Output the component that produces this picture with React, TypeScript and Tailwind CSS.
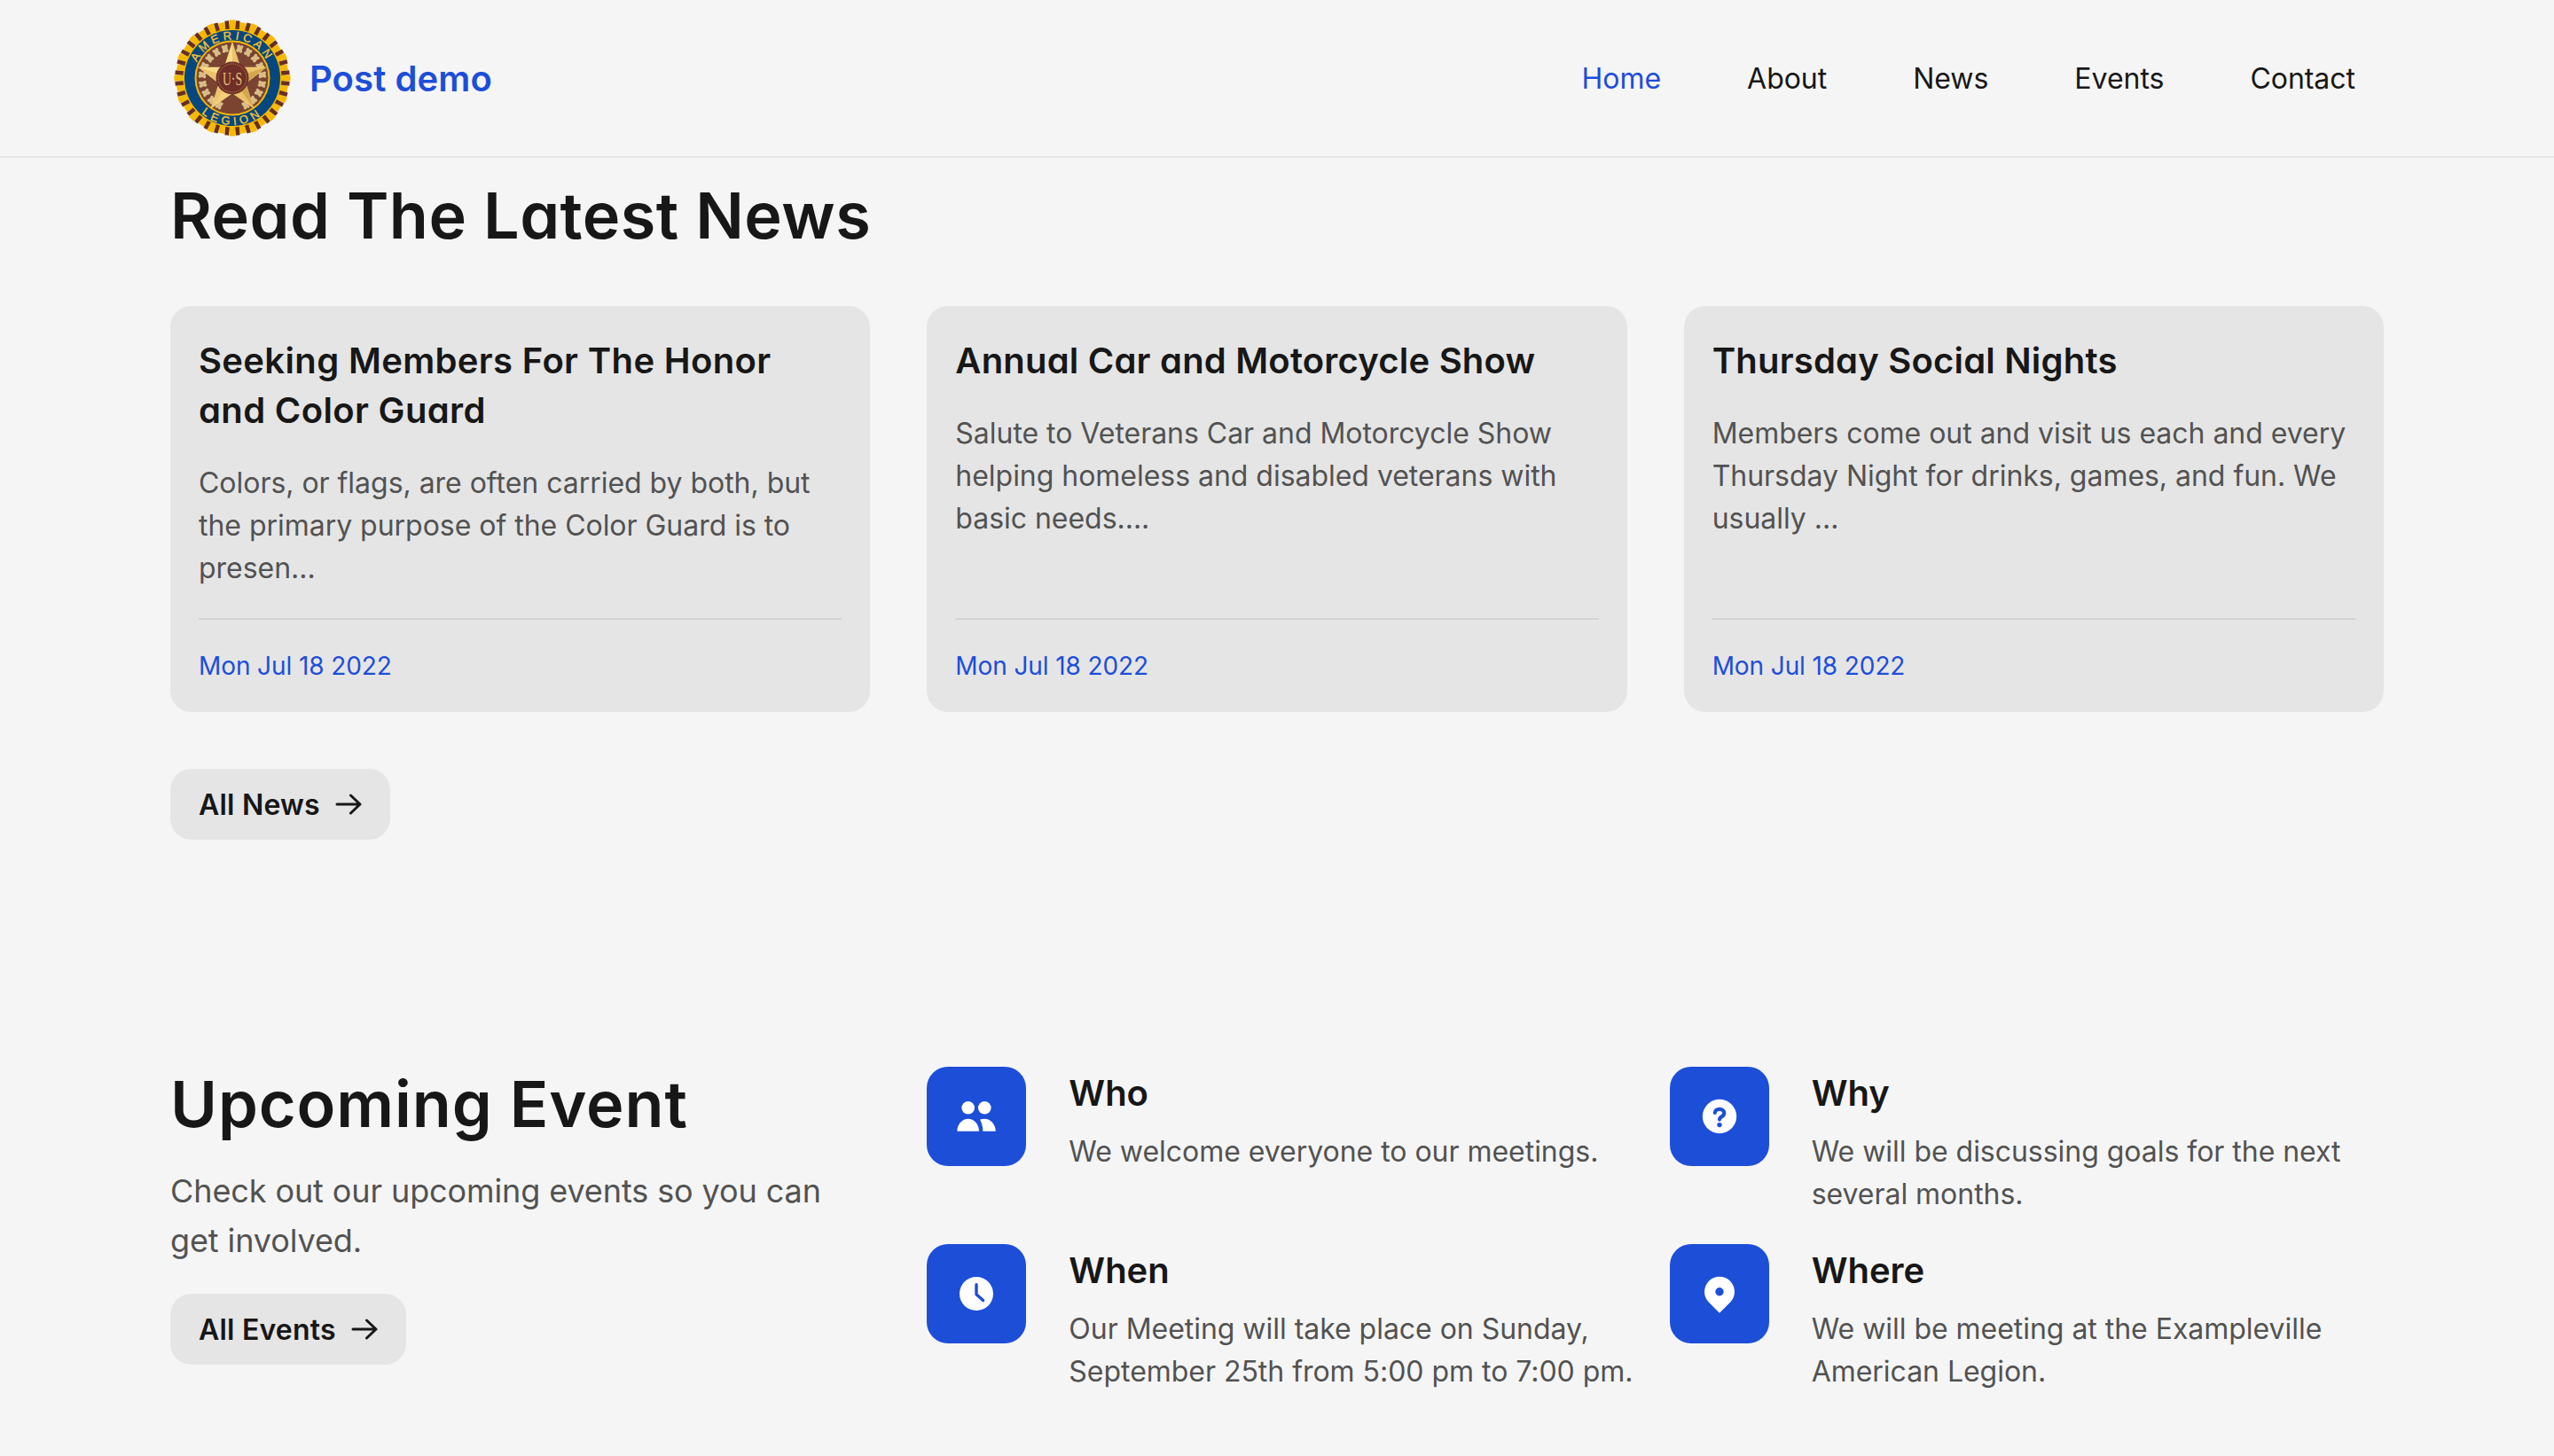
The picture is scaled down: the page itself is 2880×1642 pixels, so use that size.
import React from "react";

const heading = "font-['Inter','Liberation_Sans',sans-serif] [font-feature-settings:'cv11']";

function Logo() {
  const rays = Array.from({ length: 64 }, (_, i) => i);
  const stars = "70,30 79,58 108,58 85,76 94,104 70,87 46,104 55,76 32,58 61,58";
  const leaves = Array.from({ length: 9 }, (_, i) => i);
  const legend = "'Liberation Sans',sans-serif";
  return (
    <svg viewBox="0 0 140 140" className="w-[140px] h-[140px] shrink-0">
      {rays.filter((i) => i % 2 === 0).map((i) => {
        const a = i * 5.625;
        const top = 4.5 + 2 * Math.abs(Math.sin((a * 8 * Math.PI) / 180));
        return <rect key={i} x={66.5} y={top} width={7} height={16} fill="#f6b900" transform={`rotate(${a} 70 70)`} />;
      })}
      {rays.filter((i) => i % 2 === 1).map((i) => {
        const a = i * 5.625;
        const top = 3.5 + 2.5 * Math.abs(Math.sin((a * 8 * Math.PI) / 180));
        return <rect key={i} x={67.7} y={top} width={4.6} height={14} fill="#6a2f1c" transform={`rotate(${a} 70 70)`} />;
      })}
      <circle cx="70" cy="70" r="55.5" fill="#f6b900" />
      <circle cx="70" cy="70" r="54" fill="#07477f" />
      <path id="lg-top" d="M26.5 70 A43.5 43.5 0 0 1 113.5 70" fill="none" />
      <path id="lg-bot" d="M17 70 A53 53 0 0 0 123 70" fill="none" />
      <text fill="#f7c531" stroke="#f7c531" strokeWidth="0.3" fontSize="13" fontFamily={legend} letterSpacing="4" textAnchor="middle">
        <textPath href="#lg-top" startOffset="50%">AMERICAN</textPath>
      </text>
      <text fill="#f7c531" stroke="#f7c531" strokeWidth="0.3" fontSize="13" fontFamily={legend} letterSpacing="4.5" textAnchor="middle">
        <textPath href="#lg-bot" startOffset="50%">LEGION</textPath>
      </text>
      <circle cx="70" cy="70" r="42.5" fill="#f6b900" />
      <circle cx="70" cy="70" r="40.5" fill="#7b4431" />
      {leaves.map((i) => {
        const a = 14 + i * 17.5;
        return (
          <g key={i} fill="#d9bd86">
            <ellipse cx="70" cy="36" rx="2.2" ry="5" transform={`rotate(${a} 70 70) rotate(35 70 36)`} />
            <ellipse cx="70" cy="36" rx="2.2" ry="5" transform={`rotate(${a} 70 70) rotate(-35 70 36)`} />
            <ellipse cx="70" cy="36" rx="2.2" ry="5" transform={`rotate(${-a} 70 70) rotate(35 70 36)`} />
            <ellipse cx="70" cy="36" rx="2.2" ry="5" transform={`rotate(${-a} 70 70) rotate(-35 70 36)`} />
          </g>
        );
      })}
      <polygon points={stars} fill="#ecc36a" stroke="#fbe08f" strokeWidth="0.6" />
      <polygon points="70,30 70,70 61,58" fill="#f9dc8a" />
      <polygon points="32,58 70,70 61,58" fill="#f9dc8a" />
      <polygon points="108,58 70,70 85,76" fill="#d4a650" />
      <polygon points="46,104 70,70 70,87" fill="#f3cf7a" />
      <polygon points="94,104 70,70 85,76" fill="#d4a650" />
      <circle cx="70" cy="70" r="18.5" fill="#6f2f28" />
      <circle cx="70" cy="70" r="16" fill="none" stroke="#d7a95c" strokeWidth="0.8" strokeDasharray="1 1" />
      <text x="70" y="77.5" textAnchor="middle" fill="#e6bf74" fontSize="22" textLength="22" lengthAdjust="spacingAndGlyphs" fontFamily="'Liberation Serif',serif">U·S</text>
    </svg>
  );
}

const Arrow = () => (
  <svg viewBox="0 0 33 36" fill="none" stroke="currentColor" strokeWidth="3" strokeLinecap="round" strokeLinejoin="round" className="w-[33px] h-9 shrink-0">
    <path d="M5 18 H31 M20.5 8 L31 18 L20.5 28" />
  </svg>
);

const Who = () => (
  <svg viewBox="0 0 24 24" fill="white" className="w-12 h-12">
    <circle cx="7.35" cy="7.15" r="3.65" />
    <circle cx="16.65" cy="7.15" r="3.65" />
    <path d="M1.15 20.35 C1.15 16.5 3.9 13.35 7.35 13.35 C10.8 13.35 13.5 16.5 13.5 20.35 Z" />
    <path d="M14 13.8 C15 13.5 15.8 13.35 16.65 13.35 C20.1 13.35 22.85 16.5 22.85 20.35 H15.65 C15.65 17.8 15 15.6 14 13.8 Z" />
  </svg>
);
const Why = () => (
  <svg viewBox="0 0 24 24" className="w-12 h-12">
    <circle cx="12" cy="12" r="9.6" fill="white" />
    <path d="M9.4 10 C9.4 8.7 10.5 7.9 12 7.9 C13.5 7.9 14.6 8.8 14.6 10.1 C14.6 11.2 13.9 11.8 13 12.3 C12.3 12.7 12 13 12 13.8" fill="none" stroke="#1d4ed8" strokeWidth="2.1" strokeLinecap="round" />
    <circle cx="12" cy="16.8" r="1.35" fill="#1d4ed8" />
  </svg>
);
const When = () => (
  <svg viewBox="0 0 24 24" className="w-12 h-12">
    <circle cx="12" cy="12" r="9.5" fill="white" />
    <path d="M12 6.8 V12.4 L15.8 15.8" fill="none" stroke="#1d4ed8" strokeWidth="1.7" strokeLinecap="round" strokeLinejoin="round" />
  </svg>
);
const Where = () => (
  <svg viewBox="0 0 24 24" className="w-12 h-12">
    <path
      fillRule="evenodd"
      fill="white"
      d="M5.99 16.86 A8.5 8.5 0 1 1 18.01 16.86 L12 22.87 Z M12 8.5 A2.35 2.35 0 1 0 12 13.2 A2.35 2.35 0 1 0 12 8.5 Z"
    />
  </svg>
);

const cards = [
  {
    title: ["Seeking Members For The Honor", "and Color Guard"],
    track: "tracking-[0.35px]",
    body: "Colors, or flags, are often carried by both, but the primary purpose of the Color Guard is to presen...",
  },
  {
    title: ["Annual Car and Motorcycle Show"],
    track: "tracking-[0.2px]",
    body: "Salute to Veterans Car and Motorcycle Show helping homeless and disabled veterans with basic needs....",
  },
  {
    title: ["Thursday Social Nights"],
    track: "tracking-[0.2px]",
    body: "Members come out and visit us each and every Thursday Night for drinks, games, and fun. We usually ...",
  },
];

const features = [
  { title: "Who", body: "We welcome everyone to our meetings.", icon: <Who /> },
  { title: "Why", body: "We will be discussing goals for the next several months.", icon: <Why /> },
  { title: "When", body: "Our Meeting will take place on Sunday, September 25th from 5:00 pm to 7:00 pm.", icon: <When /> },
  { title: "Where", body: "We will be meeting at the Exampleville American Legion.", icon: <Where /> },
];

function Button({ label }: { label: string }) {
  return (
    <a className={`inline-flex items-center gap-[14px] h-20 px-8 rounded-3xl bg-[#e5e5e5] text-[#171717] text-[32px] font-semibold tracking-[0.2px] ${heading}`}>
      <span className="pt-0.5">{label}</span>
      <Arrow />
    </a>
  );
}

export default function App() {
  return (
    <div className="h-[1642px] overflow-hidden bg-[#f5f5f5] text-[#171717] font-['Inter','Liberation_Sans',sans-serif]">
      <header className="h-[178px] border-b-2 border-[#e5e5e5]">
        <div className="mx-[192px] h-full flex items-center justify-between pr-8">
          <a className="flex items-center gap-[17px]">
            <Logo />
            <span className={`pt-0.5 text-[40px] font-semibold tracking-[0.1px] text-[#1d4ed8] ${heading}`}>Post demo</span>
          </a>
          <nav className="flex items-center gap-[97px] pt-0.5 text-[32px] leading-[48px] tracking-[-0.03px]">
            <a className="text-[#1d4ed8]">Home</a>
            <a>About</a>
            <a>News</a>
            <a>Events</a>
            <a>Contact</a>
          </nav>
        </div>
      </header>
      <main className="mx-[192px] pt-[23px]">
        <section>
          <h2 className={`text-[72px] leading-[80px] font-semibold pt-0.5 mb-[62px] tracking-[0.45px] ${heading}`}>Read The Latest News</h2>
          <div className="grid grid-cols-3 gap-16">
            {cards.map((c) => (
              <article key={c.title[0]} className="flex flex-col h-[458px] p-8 rounded-3xl bg-[#e5e5e5]">
                <h3 className={`text-[40px] leading-[56px] font-semibold pt-0.5 mb-[30px] ${c.track} ${heading}`}>
                  {c.title.map((line) => (
                    <span key={line} className="block whitespace-nowrap">{line}</span>
                  ))}
                </h3>
                <p className="text-[32px] leading-[48px] tracking-[-0.03px] text-[#525252]">{c.body}</p>
                <div className="mt-auto border-t-2 border-[#d4d4d4] pt-8 text-[28px] leading-[40px] tracking-[-0.1px] text-[#1d4ed8]">
                  Mon Jul 18 2022
                </div>
              </article>
            ))}
          </div>
          <div className="mt-16">
            <Button label="All News" />
          </div>
        </section>
        <section className="grid grid-cols-3 gap-16 mt-[256px]">
          <div>
            <h2 className={`text-[72px] leading-[80px] font-semibold pt-0.5 mb-[30px] tracking-[0.9px] ${heading}`}>Upcoming Event</h2>
            <p className="text-[36px] leading-[56px] tracking-[-0.1px] text-[#525252] mb-8">
              Check out our upcoming events so you can get involved.
            </p>
            <Button label="All Events" />
          </div>
          <div className="col-span-2 grid grid-cols-2 gap-x-8 gap-y-8 content-start">
            {features.map((f) => (
              <div key={f.title} className="flex gap-12">
                <div className="flex items-center justify-center w-28 h-28 shrink-0 rounded-3xl bg-[#1d4ed8]">{f.icon}</div>
                <div>
                  <h3 className={`text-[40px] leading-[56px] font-semibold pt-0.5 mb-[14px] ${heading}`}>{f.title}</h3>
                  <p className="text-[32px] leading-[48px] tracking-[-0.03px] text-[#525252]">{f.body}</p>
                </div>
              </div>
            ))}
          </div>
        </section>
      </main>
    </div>
  );
}
